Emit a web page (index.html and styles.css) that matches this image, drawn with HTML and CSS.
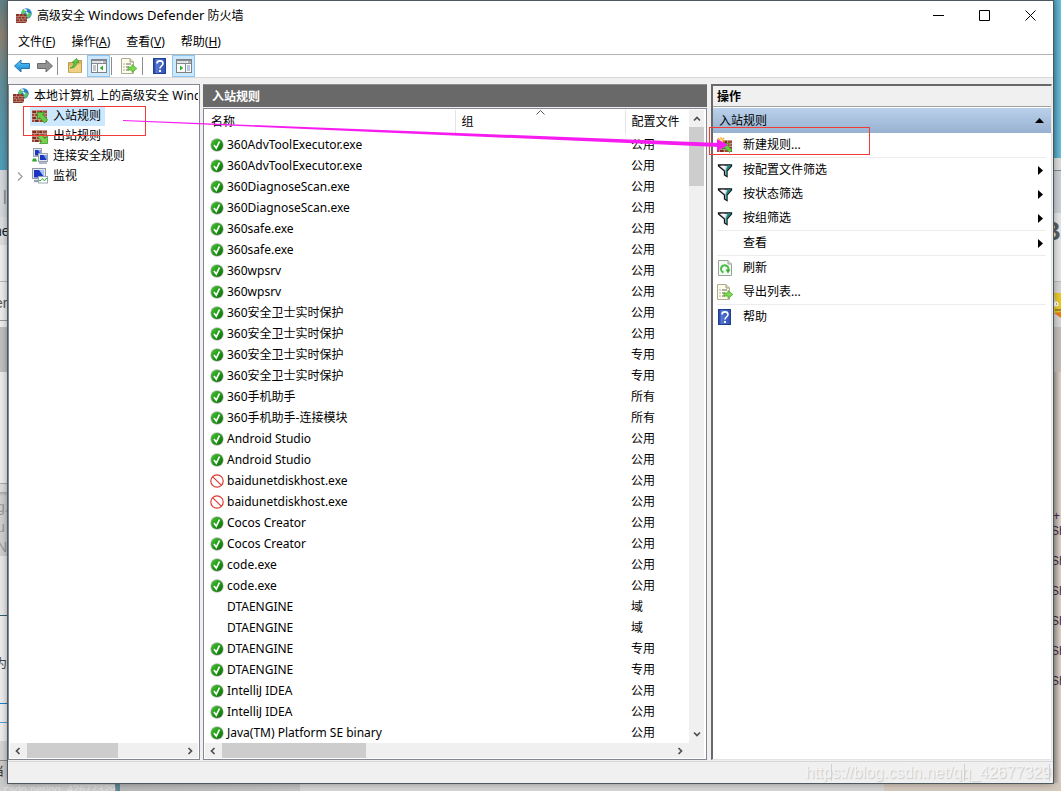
FILE: index.html
```html
<!DOCTYPE html>
<html lang="zh-CN">
<head>
<meta charset="utf-8">
<title>高级安全 Windows Defender 防火墙</title>
<link rel="stylesheet" href="styles.css">
</head>
<body>
<svg class="defs" aria-hidden="true">
  <defs>
    <linearGradient id="gGreen" x1="0" y1="0" x2="1" y2="1"><stop offset="0" stop-color="#4fc63a"/><stop offset=".5" stop-color="#1f9a14"/><stop offset="1" stop-color="#0c6a0a"/></linearGradient>
    <linearGradient id="gBlue" x1="0" y1="0" x2="0" y2="1"><stop offset="0" stop-color="#7fd0f7"/><stop offset=".5" stop-color="#35a6e6"/><stop offset="1" stop-color="#1583cf"/></linearGradient>
    <linearGradient id="gHelp" x1="0" y1="0" x2="1" y2="0"><stop offset="0" stop-color="#1d3a92"/><stop offset=".25" stop-color="#5577d6"/><stop offset="1" stop-color="#2f4fb4"/></linearGradient>
  </defs>
  <symbol id="bricks" viewBox="0 0 16 16">
    <rect x="0" y="2" width="15" height="12" fill="#a04b3a"/>
    <path d="M0 2.500h15M0 5.500h15M0 8.500h15M0 11.500h15M4.500 2v3.500M10.500 2v3.500M2.500 5.500v3M7.500 5.500v3M13 5.500v3M4.500 8.500v3M10.500 8.500v3M2.500 11.500V14M7.500 11.500V14" stroke="#c9a497" stroke-width=".8" fill="none"/>
    <path d="M1 4h3M5 7h2M8 4h2M12 10h2M1 10h3M3 13h3" stroke="#6a2419" stroke-width="1.500"/>
  </symbol>
  <symbol id="firewall" viewBox="0 0 16 16">
    <circle cx="10.500" cy="5.500" r="5.200" fill="#2a7fc4"/>
    <path d="M6 3c2-3 5-2 4 0s-1 2-2 3-3 0-2-3zM11 5c2-1 4 0 4 2l-2 3c-2 0-3-3-2-5z" fill="#5cc95d"/>
    <path d="M8 1.500l3 1M10 4l2 2" stroke="#d7f3ff" stroke-width="1.500"/>
    <path d="M0 6h9l2 2v6l-2 1H0z" fill="#8a3527"/>
    <path d="M0 8.500h11M0 11h11M0 13.500h11M3.500 6v2.500M7 6v2.500M2 8.500V11M5.500 8.500V11M9 8.500V11M3.500 11v2.500M7 11v2.500" stroke="#c49384" stroke-width=".7"/>
  </symbol>
  <symbol id="inbound" viewBox="0 0 16 16"><use href="#bricks"/><path d="M5.500 4.500h7L10.700 6.500l5 5.500-3.200 3-5-5.500-2 2z" fill="#66cc45" stroke="#3b9a28" stroke-width=".8"/></symbol>
  <symbol id="outbound" viewBox="0 0 16 16"><use href="#bricks"/><path d="M15.500 15.500h-8l2.300-2.300L6 9.500l3-3 3.900 3.900 2.600-2.400z" fill="#74d44e" stroke="#3b9a28" stroke-width=".8"/></symbol>
  <symbol id="newrule" viewBox="0 0 16 16"><use href="#bricks" y="1"/><path d="M5.500 6.500h7l-1.800 1.800 4.300 4.700-2.500 2.500-5-5-2 2z" fill="#66cc45" stroke="#3b9a28" stroke-width=".8"/><path d="M4 0v8M0 4h8M1 1l6 6M7 1L1 7" stroke="#f9a11b" stroke-width="1.200"/><circle cx="4" cy="4" r="1.700" fill="#fff2a0"/></symbol>
  <symbol id="conn" viewBox="0 0 16 16">
    <rect x="1.500" y=".5" width="8" height="8" fill="#e3e7ee" stroke="#9aa1ae"/><rect x="3" y="2" width="5.500" height="5.500" fill="#1b35c0"/><path d="M6 2h2.500v4z" fill="#7fa4f2"/>
    <path d="M0 13.500l1-3h3l1 3z" fill="#2ca52c"/>
    <rect x="6.500" y="5.500" width="9" height="8" fill="#e3e7ee" stroke="#9aa1ae"/><rect x="8" y="7" width="6.500" height="5" fill="#1b35c0"/><path d="M11.500 7h3v5z" fill="#7fa4f2"/><path d="M7 15h8" stroke="#98a1ad" stroke-width="1.500"/>
  </symbol>
  <symbol id="monitor" viewBox="0 0 16 16">
    <rect x=".5" y=".5" width="13" height="10" fill="#e3e7ee" stroke="#8f98a8"/><rect x="2" y="2" width="10" height="7.500" fill="#1b35c0"/><path d="M7 2h5v7z" fill="#a3c0f8"/><path d="M2 13h6" stroke="#98a1ad" stroke-width="2.500"/>
    <rect x="6.500" y="8.500" width="9" height="6.500" fill="#fff" stroke="#9aa5b5"/><path d="M7 12.500h2l1.500-2 2 2.500 1.500-2.500h1.500" fill="none" stroke="#35b33a"/>
  </symbol>
  <symbol id="back" viewBox="0 0 16 16"><path d="M.5 8L7 2v3.500h8.500v5H7V14z" fill="url(#gBlue)" stroke="#2a72a8"/></symbol>
  <symbol id="fwd" viewBox="0 0 16 16"><path d="M15.500 8L9 2v3.500H.5v5H9V14z" fill="#929292" stroke="#6b6b6b"/></symbol>
  <symbol id="folder" viewBox="0 0 16 16"><path d="M1.500 4.500h7l1.500-2h4.500v12h-13z" fill="#dcb765" stroke="#c09a4b"/><path d="M2 8l12-2v8.500H2z" fill="#efd084"/><path d="M3 10c3-1 4-3 4-5.500H5L9.500.5 12 4.500H9.700C9.500 8 7.500 10 3 10z" fill="#62c943" stroke="#3b9a28" stroke-width=".8"/></symbol>
  <symbol id="paneL" viewBox="0 0 16 16"><rect x=".5" y="1.500" width="15" height="13" fill="#fafafa" stroke="#7d8288"/><path d="M1 2.500h14M1 5.500h14M6.500 6v8" stroke="#858a90"/><path d="M1 4h10" stroke="#c5c9cd"/><path d="M12 4h3" stroke="#6b7178"/><path d="M2 8h3M2 10h3M2 12h3" stroke="#8a9097"/><path d="M12 7.500v5L8.800 10z" fill="#2eae2e"/></symbol>
  <symbol id="paneR" viewBox="0 0 16 16"><rect x=".5" y="1.500" width="15" height="13" fill="#fafafa" stroke="#7d8288"/><path d="M1 2.500h14M1 5.500h14M9.500 6v8" stroke="#858a90"/><path d="M1 4h10" stroke="#c5c9cd"/><path d="M12 4h3" stroke="#6b7178"/><path d="M11 8h3M11 10h3M11 12h3" stroke="#6f95bd"/><path d="M4 7.500v5L7.200 10z" fill="#2eae2e"/></symbol>
  <symbol id="export" viewBox="0 0 16 16"><path d="M.5.5H9L12.500 4v11.500H.5z" fill="#fdfbe9" stroke="#b0ac93"/><path d="M9 .5V4h3.500" fill="#ddd9bb" stroke="#a39f86"/><path d="M2.500 6h1M5 6h5M2.500 9h1M5 9h3M2.500 12h1M5 12h3" stroke="#6a6a6a"/><path d="M7 9h4V6.500L15.800 10.500 11 14.500V12H7z" fill="#7ed653" stroke="#4dab2f" stroke-width=".8"/></symbol>
  <symbol id="help" viewBox="0 0 16 16"><rect x="1.500" y=".5" width="12" height="15" fill="url(#gHelp)" stroke="#23408f"/><path d="M5 5.500c0-3.500 6-3.500 6 0C11 8 8 8 8 10.500" fill="none" stroke="#fff" stroke-width="1.600"/><rect x="7" y="12" width="2" height="2" fill="#fff"/></symbol>
  <symbol id="refresh" viewBox="0 0 16 16"><path d="M1.500.5H11L14.500 4v11.500h-13z" fill="#f4fbf2" stroke="#9aa39a"/><path d="M11 .5V4h3.500" fill="#ddd" stroke="#9aa39a"/><path d="M6.500 12.500A3.700 3.700 0 1 1 11.300 10" fill="none" stroke="#4cbc48" stroke-width="2"/><path d="M8.500 9.500h5l-2.500 4z" fill="#37ad35"/></symbol>
  <symbol id="funnel" viewBox="0 0 16 16"><path d="M1.500 3h13v1L10 9v5.500L7.500 13V9L1.500 4z" fill="#dfe2e3" stroke="#111" stroke-width="1.300"/><path d="M11 3.600h3L9.400 8.600v4.600H9V8z" fill="#128383" stroke="#128383" stroke-width=".6"/><path d="M4 3.700h3.500V7z" fill="#fff"/></symbol>
  <symbol id="ok" viewBox="0 0 14 14"><circle cx="7" cy="7" r="6.700" fill="#b7b9b7"/><circle cx="7" cy="7" r="6" fill="url(#gGreen)"/><path d="M4 7l2.300 3.200L9.500 3.500" fill="none" stroke="#fff" stroke-width="1.700"/></symbol>
  <symbol id="block" viewBox="0 0 14 14"><circle cx="7" cy="7" r="6.200" fill="#fff" stroke="#dd3a33" stroke-width="1.200"/><path d="M2.800 2.800l8.400 8.400" stroke="#dd3a33" stroke-width="1.200"/></symbol>
  <symbol id="chev" viewBox="0 0 8 8"><path d="M5.500 1L2.500 4l3 3" fill="none" stroke="#505050" stroke-width="1.700"/></symbol>
</svg>

<div class="backdrop" aria-hidden="true">
  <div class="strip left">
    <div class="sky"></div><div class="l1">|</div><div class="l2">ne</div><div class="l3"></div><div class="l4">er</div><div class="l5"></div><div class="l6"></div>
    <div class="l7"><span>g.</span><span>u</span><span>Nj</span></div><div class="l8"></div><div class="l9">为</div><div class="l10"></div><div class="l11">当</div>
  </div>
  <div class="strip right">
    <div class="sky2"></div><div class="r1"></div><div class="r2">B</div>
    <div class="r3"><svg viewBox="0 0 8 26"><path d="M1 0h7v20H2l-2-5 3-3z" fill="#e8c92a"/><circle cx="3" cy="11" r="2.500" fill="#fff"/><path d="M2 17h6M3 11h1" stroke="#6b4a17"/><path d="M1 20l7-1v6z" fill="#ee7a16"/></svg></div>
    <div class="r4"></div>
    <div class="r5"><span>+</span><span>Sh</span><span>Sh</span><span>Sh</span><span>Sh</span><span>Sh</span><span>Sh</span></div>
  </div>
  <div class="under"><span>log.csdn.net/qq_42677329</span></div>
</div>

<main class="window">
  <header class="titlebar">
    <svg class="i16"><use href="#firewall"/></svg>
    <h1>高级安全 <span class="lat">Windows Defender</span> 防火墙</h1>
    <div class="caption">
      <button aria-label="最小化"><svg viewBox="0 0 11 11"><path d="M0 5.500h11"/></svg></button>
      <button aria-label="最大化"><svg viewBox="0 0 11 11"><path d="M.5.5h10v10H.5z"/></svg></button>
      <button aria-label="关闭"><svg viewBox="0 0 11 11"><path d="M.5.5l10 10M10.500.5l-10 10"/></svg></button>
    </div>
  </header>
  <nav class="menu">
    <button>文件(<u>F</u>)</button><button>操作(<u>A</u>)</button><button>查看(<u>V</u>)</button><button>帮助(<u>H</u>)</button>
  </nav>
  <div class="toolbar">
    <button aria-label="后退"><svg class="i16"><use href="#back"/></svg></button>
    <button aria-label="前进"><svg class="i16"><use href="#fwd"/></svg></button>
    <i></i>
    <button class="wide" aria-label="上一级"><svg class="i16"><use href="#folder"/></svg></button>
    <button class="on" aria-label="显示树"><svg class="i16"><use href="#paneL"/></svg></button>
    <i></i>
    <button class="wide" aria-label="导出列表"><svg class="i16"><use href="#export"/></svg></button>
    <i></i>
    <button class="wide" aria-label="帮助"><svg class="i16"><use href="#help"/></svg></button>
    <button class="on" aria-label="显示操作窗格"><svg class="i16"><use href="#paneR"/></svg></button>
  </div>

  <div class="panes">
    <section class="tree">
      <ul>
        <li class="root"><svg class="i16"><use href="#firewall"/></svg><span>本地计算机 上的高级安全 Wind</span></li>
        <li class="sel"><b></b><span class="hit"><svg class="i16"><use href="#inbound"/></svg><span>入站规则</span></span></li>
        <li><b></b><span class="hit"><svg class="i16"><use href="#outbound"/></svg><span>出站规则</span></span></li>
        <li><b></b><span class="hit"><svg class="i16"><use href="#conn"/></svg><span>连接安全规则</span></span></li>
        <li><b><svg viewBox="0 0 8 8"><path d="M2 0l4 4-4 4" fill="none" stroke="#a0a0a0" stroke-width="1.400"/></svg></b><span class="hit"><svg class="i16"><use href="#monitor"/></svg><span>监视</span></span></li>
      </ul>
      <div class="hbar"><svg><use href="#chev"/></svg><div class="track"><div class="thumb t1"></div></div><svg class="flip"><use href="#chev"/></svg></div>
    </section>

    <section class="center">
      <h2>入站规则</h2>
      <div class="list">
        <div class="body">
          <table>
            <thead><tr><th class="name">名称</th><th class="group">组<svg class="sort" viewBox="0 0 9 5"><path d="M.5 4.500l4-4 4 4" fill="none" stroke="#555"/></svg></th><th class="prof">配置文件</th></tr></thead>
            <tbody>
              <tr><td><svg><use href="#ok"/></svg>360AdvToolExecutor.exe</td><td></td><td>公用</td></tr>
              <tr><td><svg><use href="#ok"/></svg>360AdvToolExecutor.exe</td><td></td><td>公用</td></tr>
              <tr><td><svg><use href="#ok"/></svg>360DiagnoseScan.exe</td><td></td><td>公用</td></tr>
              <tr><td><svg><use href="#ok"/></svg>360DiagnoseScan.exe</td><td></td><td>公用</td></tr>
              <tr><td><svg><use href="#ok"/></svg>360safe.exe</td><td></td><td>公用</td></tr>
              <tr><td><svg><use href="#ok"/></svg>360safe.exe</td><td></td><td>公用</td></tr>
              <tr><td><svg><use href="#ok"/></svg>360wpsrv</td><td></td><td>公用</td></tr>
              <tr><td><svg><use href="#ok"/></svg>360wpsrv</td><td></td><td>公用</td></tr>
              <tr><td><svg><use href="#ok"/></svg>360安全卫士实时保护</td><td></td><td>公用</td></tr>
              <tr><td><svg><use href="#ok"/></svg>360安全卫士实时保护</td><td></td><td>公用</td></tr>
              <tr><td><svg><use href="#ok"/></svg>360安全卫士实时保护</td><td></td><td>专用</td></tr>
              <tr><td><svg><use href="#ok"/></svg>360安全卫士实时保护</td><td></td><td>专用</td></tr>
              <tr><td><svg><use href="#ok"/></svg>360手机助手</td><td></td><td>所有</td></tr>
              <tr><td><svg><use href="#ok"/></svg>360手机助手-连接模块</td><td></td><td>所有</td></tr>
              <tr><td><svg><use href="#ok"/></svg>Android Studio</td><td></td><td>公用</td></tr>
              <tr><td><svg><use href="#ok"/></svg>Android Studio</td><td></td><td>公用</td></tr>
              <tr><td><svg><use href="#block"/></svg>baidunetdiskhost.exe</td><td></td><td>公用</td></tr>
              <tr><td><svg><use href="#block"/></svg>baidunetdiskhost.exe</td><td></td><td>公用</td></tr>
              <tr><td><svg><use href="#ok"/></svg>Cocos Creator</td><td></td><td>公用</td></tr>
              <tr><td><svg><use href="#ok"/></svg>Cocos Creator</td><td></td><td>公用</td></tr>
              <tr><td><svg><use href="#ok"/></svg>code.exe</td><td></td><td>公用</td></tr>
              <tr><td><svg><use href="#ok"/></svg>code.exe</td><td></td><td>公用</td></tr>
              <tr><td><svg></svg>DTAENGINE</td><td></td><td>域</td></tr>
              <tr><td><svg></svg>DTAENGINE</td><td></td><td>域</td></tr>
              <tr><td><svg><use href="#ok"/></svg>DTAENGINE</td><td></td><td>专用</td></tr>
              <tr><td><svg><use href="#ok"/></svg>DTAENGINE</td><td></td><td>专用</td></tr>
              <tr><td><svg><use href="#ok"/></svg>IntelliJ IDEA</td><td></td><td>公用</td></tr>
              <tr><td><svg><use href="#ok"/></svg>IntelliJ IDEA</td><td></td><td>公用</td></tr>
              <tr><td><svg><use href="#ok"/></svg>Java(TM) Platform SE binary</td><td></td><td>公用</td></tr>
            </tbody>
          </table>
          <div class="vbar"><svg class="up"><use href="#chev"/></svg><div class="thumb"></div><svg class="down"><use href="#chev"/></svg></div>
        </div>
        <div class="hbar corner"><svg><use href="#chev"/></svg><div class="track"><div class="thumb t2"></div></div><svg class="flip"><use href="#chev"/></svg></div>
      </div>
    </section>

    <aside class="actions">
      <h2>操作</h2>
      <h3>入站规则<svg viewBox="0 0 9 5"><path d="M4.500 0L9 5H0z"/></svg></h3>
      <div class="grp"><button><svg class="i16"><use href="#newrule"/></svg>新建规则...</button></div>
      <div class="grp">
        <button><svg class="i16"><use href="#funnel"/></svg>按配置文件筛选<svg class="more" viewBox="0 0 5 9"><path d="M0 0l5 4.500L0 9z"/></svg></button>
        <button><svg class="i16"><use href="#funnel"/></svg>按状态筛选<svg class="more" viewBox="0 0 5 9"><path d="M0 0l5 4.500L0 9z"/></svg></button>
        <button><svg class="i16"><use href="#funnel"/></svg>按组筛选<svg class="more" viewBox="0 0 5 9"><path d="M0 0l5 4.500L0 9z"/></svg></button>
      </div>
      <div class="grp"><button><svg class="i16"></svg>查看<svg class="more" viewBox="0 0 5 9"><path d="M0 0l5 4.500L0 9z"/></svg></button></div>
      <div class="grp"><button><svg class="i16"><use href="#refresh"/></svg>刷新</button><button><svg class="i16"><use href="#export"/></svg>导出列表...</button></div>
      <div class="grp"><button><svg class="i16"><use href="#help"/></svg>帮助</button></div>
    </aside>
  </div>
  <footer class="status"><span class="mark">https://blog.csdn.net/qq_42677329</span><i class="s1"></i><i class="s2"></i><i class="s3"></i></footer>
</main>

<svg class="notes" aria-hidden="true">
  <rect x="23.500" y="106.500" width="122" height="29" fill="none" stroke="#f23a36"/>
  <rect x="709.500" y="127.500" width="160" height="27" fill="none" stroke="#f23a36"/>
  <path d="M123 120L719 143V147L123 121z" fill="#f61cf0"/>
  <path d="M717 139l11 6-11 6z" fill="#f61cf0"/>
</svg>
</body>
</html>
```

FILE: styles.css
```css
* { box-sizing: border-box; }
html, body { margin: 0; height: 100%; }
body {
  position: relative;
  display: flex;
  padding: 1px 8px 8px;
  overflow: hidden;
  background: #e3e3e3;
  font: 12px/20px "Noto Sans", "Noto Sans CJK SC", sans-serif;
  color: #000;
}
svg { display: block; flex: none; }
h1, h2, h3, ul { margin: 0; padding: 0; font: inherit; list-style: none; }
button { border: 0; padding: 0; background: none; font: inherit; color: inherit; }
.defs { position: absolute; width: 0; height: 0; }
.i16 { width: 16px; height: 16px; }
.lat { font-size: 13px; }

/* desktop behind the window */
.backdrop { position: absolute; inset: 0; overflow: hidden; }
.strip { position: absolute; top: 0; bottom: 0; width: 10px; display: flex; flex-direction: column; overflow: hidden; font: 14px/20px "Liberation Sans", sans-serif; }
.strip > div { flex: none; overflow: hidden; }
.left { left: 0; }
.right { right: 0; width: 8px; color: #333; }
.sky { height: 170px; background: linear-gradient(#5f7f86, #8b8272 35px, #628e98 80px, #4f9fba); }
.l1 { height: 47px; padding: 16px 0 0 3px; background: #d5d8dc; color: #777; }
.l2 { height: 28px; padding-top: 4px; background: #dedfe1; color: #222; text-indent: -6px; }
.l3 { height: 37px; background: #eee; border-bottom: 1px solid #b8b8b8; }
.l4 { height: 39px; padding-top: 11px; background: #ededed; color: #555; text-indent: -5px; border-bottom: 1px solid #999; }
.l5 { height: 6px; background: #eee; }
.l6 { height: 45px; background: #c0c0c0; }
.l7 { height: 184px; padding-top: 125px; background: linear-gradient(#ededed 111px, #aaa 111px, #aaa 112px, #ddd 112px, #ddd 120px, #aaa 120px, #d0d0d0 124px); color: #999; }
.l7 span { display: block; text-indent: -3px; }
.l8 { height: 60px; background: #e9e9e9; border-bottom: 1px solid #31606c; }
.l9 { height: 88px; padding-top: 37px; background: #ededed; border-bottom: 1px solid #1b7fc8; font-family: "Noto Sans CJK SC", sans-serif; font-size: 12px; text-indent: -5px; color: #444; }
.l10 { height: 57px; background: linear-gradient(#eee 18px, #4b9ed8 18px, #4b9ed8 19px, #eee 19px, #eee 37px, #d6d6d6 37px); border-bottom: 1px solid #888; }
.l11 { height: 30px; background: #ccc; font-family: "Noto Sans CJK SC", sans-serif; font-size: 12px; text-indent: -8px; color: #333; }
.sky2 { height: 158px; background: linear-gradient(90deg, #4a98b4, #6cc0dd); }
.r1 { height: 55px; background: linear-gradient(#ddd 12px, #888 12px, #888 13px, #cbd0d5 13px); }
.r2 { height: 69px; padding-top: 5px; background: #e6e6e6; border-bottom: 1px solid #bbb; font-size: 26px; line-height: 26px; font-weight: 700; text-indent: -11px; color: #5a5d60; }
.r3 { height: 45px; padding: 11px 0 0; background: #d6d6d6; }
.r3 svg { width: 8px; height: 26px; }
.r4 { height: 45px; background: #c4bcb6; }
.r5 { flex: 1 !important; padding: 134px 0 0; background: linear-gradient(90deg, #a69b94, #e0d5cd 8px); color: #3d2a4a; }
.r5 span { display: block; height: 30px; font-size: 12px; text-indent: -2px; }
.r5 span:first-child { height: 15px; text-indent: 0; }
.under { position: absolute; bottom: 0; left: 0; right: 0; height: 8px; overflow: hidden; background: linear-gradient(90deg, #ccc 115px, #5d8698 115px, #5d8698 120px, #b9b9b9 120px, #c4c4c4 300px, #d6d6d6 300px, #d6d6d6 884px, #d5c9bd 884px); color: #e0e0e0; font: 11px/12px "Liberation Sans", sans-serif; text-indent: -14px; }

/* window frame */
.window { position: relative; flex: 1; min-width: 0; display: flex; flex-direction: column; background: #f0f0f0; box-shadow: 0 0 0 1px #4c5a60, 0 0 8px rgba(0, 0, 0, .45); }
.titlebar { height: 29px; display: flex; align-items: center; gap: 5px; padding-left: 8px; background: #fff; }
.caption { display: flex; margin-left: auto; }
.caption button { width: 46px; height: 28px; display: grid; place-items: center; }
.caption svg { width: 11px; height: 11px; fill: none; stroke: #000; }
.menu { height: 25px; display: flex; gap: 16px; padding: 2px 10px 0; background: #fff; border-bottom: 1px solid #b4b4b4; }
.menu button { height: 20px; white-space: nowrap; }
.toolbar { height: 23px; display: flex; align-items: center; padding-left: 2px; background: #fff; border-bottom: 1px solid #d8d8d8; }
.toolbar button { width: 23px; height: 22px; display: grid; place-items: center; }
.toolbar .wide { width: 28px; padding-left: 3px; }
.toolbar .on { background: #cce8ff; border: 1px solid #8ec6f2; }
.toolbar i { width: 1px; height: 18px; margin: 0 1px; background: #8d8d8d; }

/* three panes */
.panes { flex: 1; min-height: 0; display: grid; grid-template-columns: 192px minmax(0, 504px) minmax(0, 1fr); column-gap: 3px; padding: 6px 1px 0 0; }
.tree { display: flex; flex-direction: column; min-width: 0; padding: 1px; background: #fff; border: 1px solid #828790; }
.tree ul { flex: 1; overflow: hidden; }
.tree li { display: flex; height: 20px; white-space: nowrap; }
.tree .root { gap: 5px; padding-left: 3px; align-items: center; }
.root span { min-width: 0; overflow: hidden; }
.tree b { width: 20px; display: grid; place-items: center; }
.tree b svg { width: 8px; height: 9px; }
.hit { display: flex; align-items: center; gap: 5px; padding: 0 4px 0 2px; }
.sel .hit { background: #cce8ff; }
.hbar { display: flex; align-items: center; height: 15px; padding: 0 4px; background: #f0f0f0; }
.hbar svg, .vbar svg { width: 8px; height: 8px; }
.track { flex: 1; height: 15px; padding: 0 5px; }
.thumb { background: #cdcdcd; }
.t1 { width: 59%; height: 15px; }
.t2 { width: 32%; height: 15px; }
.flip { transform: rotate(180deg); }
.up { transform: rotate(90deg); }
.down { transform: rotate(-90deg); }

.center { display: flex; flex-direction: column; min-width: 0; }
.center h2 { height: 23px; margin-bottom: 1px; padding-left: 9px; line-height: 23px; background: #696969; border-top: 1px solid #8d8d8d; color: #fff; font-weight: 700; }
.list { flex: 1; display: flex; flex-direction: column; padding: 1px 2px 1px 1px; background: #fff; border: 1px solid #828790; }
.body { flex: 1; display: flex; min-height: 0; }
table { flex: 1; border-collapse: collapse; table-layout: fixed; width: 100%; align-self: flex-start; }
th, td { padding: 0 6px; text-align: left; font-weight: 400; white-space: nowrap; }
th { position: relative; height: 24px; line-height: 24px; border-right: 1px solid #e5e5e5; }
th.prof { width: 64px; border: 0; }
th.group { width: 170px; }
.sort { position: absolute; left: 50%; top: 0; width: 9px; height: 5px; margin-left: -4px; }
td { height: 21px; line-height: 21px; }
td svg { display: inline-block; width: 14px; height: 14px; margin: 0 3px 2px 0; vertical-align: middle; }
td:first-child { padding-left: 5px; }
.vbar { width: 15px; display: flex; flex-direction: column; align-items: center; padding: 5px 0; background: #f0f0f0; }
.vbar .thumb { width: 15px; height: 59px; margin-top: 4px; }
.vbar .down { margin-top: auto; }
.corner { padding-right: 20px; }

.actions { min-width: 0; margin-left: 1px; background: #fff; border: 1px solid #696969; border-top-width: 2px; border-left-width: 2px; border-right-color: #e3e3e3; border-bottom-color: #e3e3e3; }
.actions h2 { height: 21px; padding-left: 4px; line-height: 21px; background: #f0f0f0; border-bottom: 1px solid #a0a0a0; font-weight: 700; }
.actions h3 { display: flex; align-items: center; justify-content: space-between; height: 25px; margin-top: 1px; padding: 0 7px 0 6px; background: linear-gradient(#b9d1ea, #98b1d1); }
.actions h3 svg { width: 9px; height: 5px; }
.grp { margin: 0 5px 0 4px; border-bottom: 1px solid #ececec; }
.grp:last-child { border: 0; }
.grp button { display: flex; align-items: center; gap: 10px; width: 100%; height: 24px; text-align: left; }
.more { width: 5px; height: 9px; margin: 0 3px 0 auto; }

.status { position: relative; height: 22px; margin-top: 1px; border-top: 1px solid #d7d7d7; overflow: hidden; }
.mark { display: block; padding-right: 2px; text-align: right; font: 16px/21px "Liberation Sans", sans-serif; color: #f4f4f4; text-shadow: 1px 1px 1px #c8c8c8; }
.status i { position: absolute; top: 2px; bottom: 2px; width: 1px; background: #d0d0d0; }
.s1 { right: 221px; }
.s2 { right: 88px; }
.s3 { right: 3px; }
.notes { position: absolute; top: 0; left: 0; width: 100%; height: 100%; pointer-events: none; }
```
